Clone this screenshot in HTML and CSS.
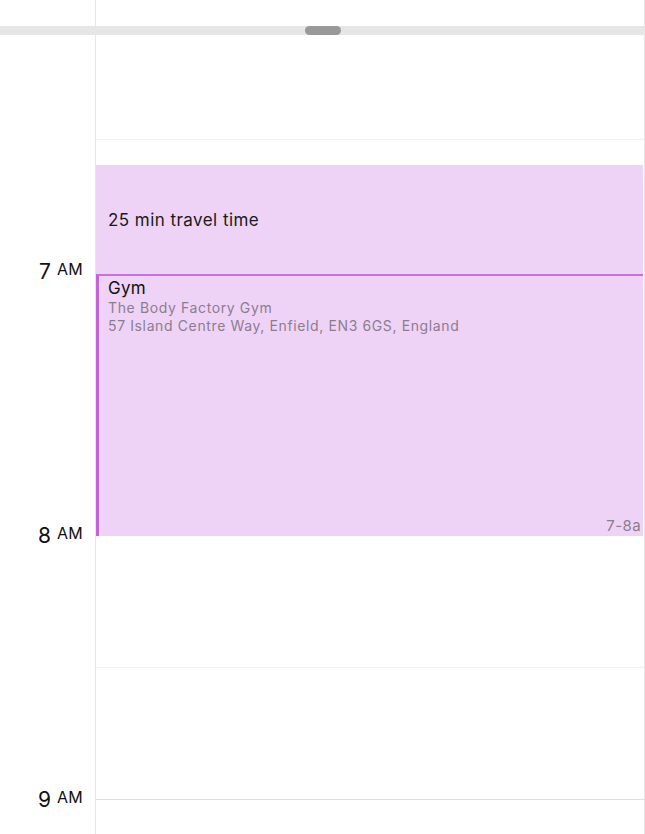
FILE: index.html
```html
<!DOCTYPE html>
<html>
<head>
<meta charset="utf-8">
<link rel="stylesheet" href="styles.css">
</head>
<body>
<div class="top">
  <div class="gut"></div>
  <div class="col"></div>
</div>
<div class="band"><div class="handle"></div></div>
<div class="main">
  <div class="gutter">
    <div class="hour">7 <span class="ampm">AM</span></div>
    <div class="hour">8 <span class="ampm">AM</span></div>
    <div class="hour">9 <span class="ampm">AM</span></div>
  </div>
  <div class="col">
    <div class="slot s1"></div>
    <div class="gap"></div>
    <div class="ev travel">25 min travel time</div>
    <div class="ev gym">
      <div class="title">Gym</div>
      <div class="sub">The Body Factory Gym</div>
      <div class="sub">57 Island Centre Way, Enfield, EN3 6GS, England</div>
      <div class="fill"></div>
      <div class="time">7-8a</div>
    </div>
    <div class="slot s2"></div>
    <div class="slot s3"></div>
  </div>
</div>
</body>
</html>
```
FILE: styles.css
```css
* { box-sizing: border-box; }
html, body { margin: 0; padding: 0; }
body {
  width: 645px;
  height: 834px;
  overflow: hidden;
  background: #fff;
  font-family: Inter, "Liberation Sans", sans-serif;
  color: #111;
}
.top {
  display: flex;
  height: 26px;
}
.gut, .gutter {
  width: 95px;
  flex: 0 0 95px;
}
.col {
  width: 550px;
  flex: 0 0 550px;
  border-left: 1px solid #e6e6e6;
  border-right: 1px solid #e6e6e6;
  display: flex;
  flex-direction: column;
}
.band {
  height: 9px;
  background: #e6e6e6;
  display: flex;
  justify-content: center;
}
.handle {
  width: 36px;
  height: 9px;
  border-radius: 5px;
  background: #999;
}
.main {
  display: flex;
  height: 799px;
  overflow: hidden;
}
.gutter {
  padding-top: 222px;
  padding-right: 12px;
}
.hour {
  height: 264px;
  line-height: 24px;
  font-size: 21px;
  text-align: right;
  color: #111;
  white-space: nowrap;
}
.ampm {
  font-size: 16px;
  letter-spacing: 0.3px;
  vertical-align: 4px;
}
.slot { flex: 0 0 auto; }
.s1 { height: 105px; border-bottom: 1px solid #f1f1f1; }
.gap { height: 25px; flex: 0 0 auto; }
.s2 { height: 132px; border-bottom: 1px solid #f1f1f1; }
.s3 { height: 132px; border-bottom: 1px solid #dedede; }
.ev {
  flex: 0 0 auto;
  margin-right: 1px;
  background: #efd3f7;
}
.travel {
  height: 109px;
  display: flex;
  align-items: center;
  padding-left: 12px;
  font-size: 17px;
  line-height: 20px;
  letter-spacing: 0.45px;
  color: #1a1a1a;
}
.gym {
  height: 262px;
  border-top: 2px solid #c772da;
  border-left: 3px solid #c462da;
  padding: 2px 2px 1px 9px;
  display: flex;
  flex-direction: column;
}
.title {
  font-size: 17px;
  line-height: 20px;
  letter-spacing: 0.3px;
  color: #111;
}
.sub {
  font-size: 14px;
  line-height: 18px;
  letter-spacing: 0.62px;
  color: #8b7d90;
}
.title + .sub { margin-top: 1px; }
.fill { flex: 1 1 auto; }
.time {
  text-align: right;
  font-size: 15px;
  line-height: 18px;
  letter-spacing: 0.4px;
  color: #8b7d90;
}
```
